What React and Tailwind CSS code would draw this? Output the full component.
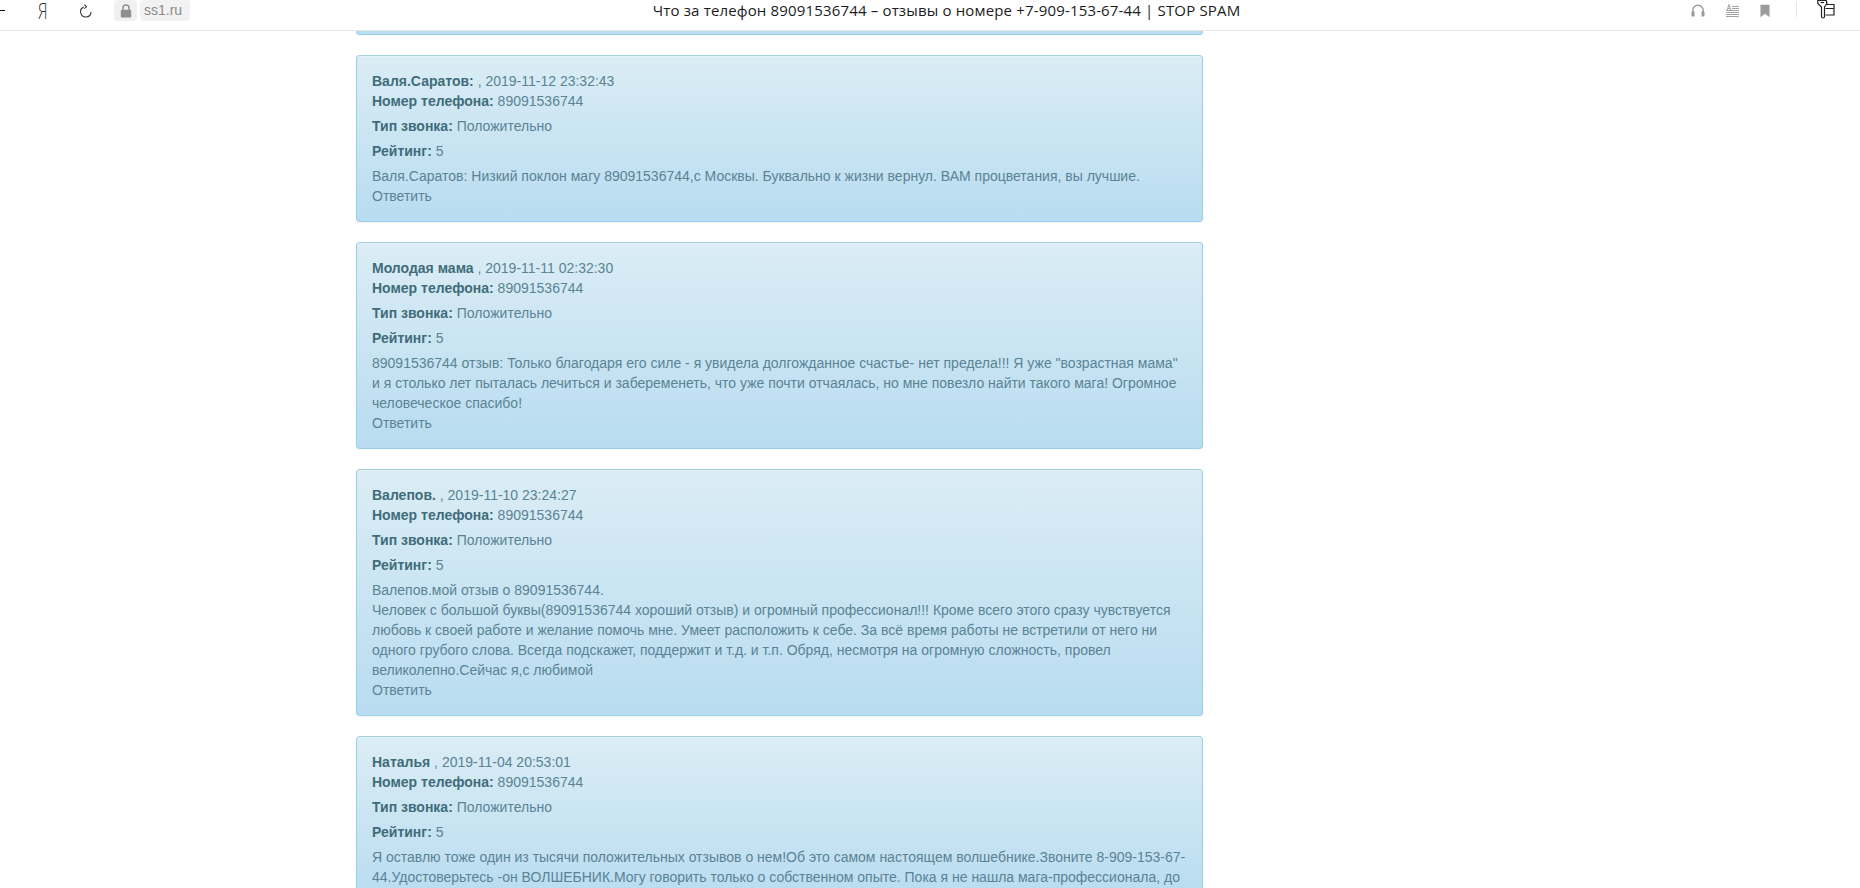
const REVIEWS = [
  {
    name: 'Валя.Саратов:',
    date: ', 2019-11-12 23:32:43',
    body: ['Валя.Саратов: Низкий поклон магу 89091536744,с Москвы. Буквально к жизни вернул. ВАМ процветания, вы лучшие.'],
    reply: true,
  },
  {
    name: 'Молодая мама',
    date: ', 2019-11-11 02:32:30',
    body: ['89091536744 отзыв: Только благодаря его силе - я увидела долгожданное счастье- нет предела!!! Я уже "возрастная мама" и я столько лет пыталась лечиться и забеременеть, что уже почти отчаялась, но мне повезло найти такого мага! Огромное человеческое спасибо!'],
    reply: true,
  },
  {
    name: 'Валепов.',
    date: ', 2019-11-10 23:24:27',
    body: [
      'Валепов.мой отзыв о 89091536744.',
      'Человек с большой буквы(89091536744 хороший отзыв) и огромный профессионал!!! Кроме всего этого сразу чувствуется любовь к своей работе и желание помочь мне. Умеет расположить к себе. За всё время работы не встретили от него ни одного грубого слова. Всегда подскажет, поддержит и т.д. и т.п. Обряд, несмотря на огромную сложность, провел великолепно.Сейчас я,с любимой',
    ],
    reply: true,
  },
  {
    name: 'Наталья',
    date: ', 2019-11-04 20:53:01',
    body: ['Я оставлю тоже один из тысячи положительных отзывов о нем!Об это самом настоящем волшебнике.Звоните 8-909-153-67-44.Удостоверьтесь -он ВОЛШЕБНИК.Могу говорить только о собственном опыте. Пока я не нашла мага-профессионала, до'],
    reply: false,
  },
]

function ReviewCard({ review }) {
  return (
    <div className="mb-5 rounded-[4px] border border-[#9acfea] border-t-[#a3d0d8] bg-gradient-to-b from-[#dbedf5] to-[#b8dcf0] p-[15px] text-[14px] leading-5 text-[#5a8394] shadow-[inset_0_1px_0_rgba(255,255,255,0.25),0_1px_2px_rgba(0,0,0,0.05)]">
      <div>
        <b className="text-[#3f6c7a]">{review.name}</b> {review.date}
      </div>
      <div>
        <b className="text-[#3f6c7a]">Номер телефона:</b> 89091536744
      </div>
      <div className="mt-[5px]">
        <b className="text-[#3f6c7a]">Тип звонка:</b> Положительно
      </div>
      <div className="mt-[5px]">
        <b className="text-[#3f6c7a]">Рейтинг:</b> 5
      </div>
      <div className="mt-[5px]">
        {review.body.map((line) => (
          <div key={line}>{line}</div>
        ))}
      </div>
      {review.reply && <div>Ответить</div>}
    </div>
  )
}

function Toolbar() {
  return (
    <div className="flex h-[31px] shrink-0 items-center border-b border-[#e6e6e6] bg-white pb-[9px]">
      <div className="h-px w-[5px] bg-black" />
      <span className="ml-[33px] w-[10px] origin-left scale-x-[0.72] text-[22px] font-light leading-[21px] text-[#333] [font-family:'Open_Sans',sans-serif]">Я</span>
      {/* refresh */}
      <svg className="ml-[31px] h-[14px] w-[14px]" viewBox="0 0 16 16" fill="none" stroke="#333" strokeWidth="1.2">
        <path d="M5.3 3.4A6 6 0 1 0 13.8 9" />
        <path d="M6.2 0.8 8.6 3.2 6 5.2" />
      </svg>
      <div className="ml-[21px] flex h-[21px] w-[23px] items-center justify-center rounded-[4px] bg-[#f0f0f0]">
        <svg className="h-[14px] w-[12px]" viewBox="0 0 12 14">
          <path d="M3 6V4a3 3 0 0 1 6 0v2" fill="none" stroke="#8f8f8f" strokeWidth="1.5" />
          <rect x="0.8" y="5.8" width="10.4" height="7.6" rx="1.2" fill="#8f8f8f" />
        </svg>
      </div>
      <div className="ml-[3px] flex h-[21px] w-[50px] items-center rounded-[4px] bg-[#f2f2f2] pl-[4px] text-[14px] text-[#8a8a8a]">ss1.ru</div>
      <div className="flex-1 pl-[12px] text-center text-[15px] tracking-[0.16px] text-[#1c1c1c] [font-family:'Open_Sans',sans-serif]">
        Что за телефон 89091536744 – отзывы о номере +7-909-153-67-44 | STOP SPAM
      </div>
      {/* headphones */}
      <svg className="h-[14px] w-[14px]" viewBox="0 0 16 16" fill="none">
        <path d="M2 9V7.500a6 6 0 0 1 12 0V9" stroke="#9a9a9a" strokeWidth="1.6" />
        <rect x="0.6" y="8.4" width="3.4" height="6" rx="1" fill="#9a9a9a" />
        <rect x="12" y="8.4" width="3.4" height="6" rx="1" fill="#9a9a9a" />
      </svg>
      {/* reader */}
      <svg className="ml-[21px] h-[13px] w-[13px]" viewBox="0 0 13 13" fill="none" stroke="#a3a3a3" strokeWidth="1">
        <path d="M1 6.500 3 0.500l2 6M1.800 4.500h2.400" />
        <path shapeRendering="crispEdges" d="M6 2.500h7M6 4.500h7M0 6.500h13M0 8.500h13M0 10.500h13M0 12.500h13" />
      </svg>
      {/* bookmark */}
      <svg className="ml-[21px] h-[14px] w-[10px]" viewBox="0 0 11 15">
        <path d="M0.500 0.500h10v14L5.500 10.500l-5 4z" fill="#9c9c9c" />
      </svg>
      <div className="ml-[26px] mt-[2px] h-[15px] w-px self-start bg-[#e6e6e6]" />
      {/* extension */}
      <svg className="ml-[20px] mr-[25px] h-[19px] w-[18px] self-start" viewBox="0 0 18 19" fill="none" stroke="#222" strokeWidth="1.2">
        <path d="M8.500 4.500h8.500v10.500H8.500M8.500 8.500h8.500" />
        <path d="M0.800 0.500h8.400l0.800 3-2.500 3.500v9.500a1.500 1.500 0 0 1-3 0V7L0.800 3.500z" fill="white" />
        <path d="M3.500 2.500h3.500" />
      </svg>
    </div>
  )
}

export default function App() {
  return (
    <div className="flex h-screen flex-col overflow-hidden bg-white [font-family:'Liberation_Sans',Arial,sans-serif]">
      <Toolbar />
      <div className="ml-[356px] w-[847px]">
        {/* previous card, scrolled under the toolbar */}
        <div className="mb-5 h-[4px] rounded-b-[4px] border border-t-0 border-[#9acfea] bg-[#b9def0] shadow-[0_1px_2px_rgba(0,0,0,0.05)]" />
        {REVIEWS.map((review) => (
          <ReviewCard key={review.name} review={review} />
        ))}
      </div>
    </div>
  )
}
